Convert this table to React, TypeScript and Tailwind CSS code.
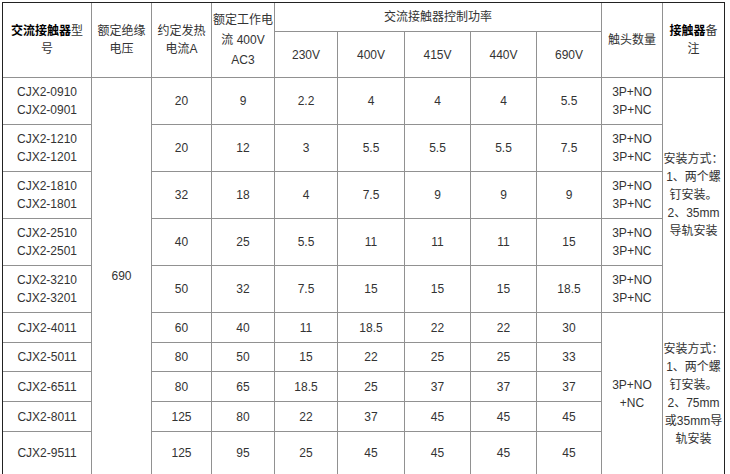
import React from "react";

const rows5 = [
  ["CJX2-0910", "CJX2-0901", "20", "9", "2.2", "4", "4", "4", "5.5"],
  ["CJX2-1210", "CJX2-1201", "20", "12", "3", "5.5", "5.5", "5.5", "7.5"],
  ["CJX2-1810", "CJX2-1801", "32", "18", "4", "7.5", "9", "9", "9"],
  ["CJX2-2510", "CJX2-2501", "40", "25", "5.5", "11", "11", "11", "15"],
  ["CJX2-3210", "CJX2-3201", "50", "32", "7.5", "15", "15", "15", "18.5"],
];

const rowsSingle = [
  ["CJX2-4011", "60", "40", "11", "18.5", "22", "22", "30"],
  ["CJX2-5011", "80", "50", "15", "22", "25", "25", "33"],
  ["CJX2-6511", "80", "65", "18.5", "25", "37", "37", "37"],
  ["CJX2-8011", "125", "80", "22", "37", "45", "45", "45"],
  ["CJX2-9511", "125", "95", "25", "45", "45", "45", "45"],
];

const cell =
  "flex flex-col items-center justify-center text-center border-r border-b border-[#919191] leading-[18px] overflow-hidden";
const lastCell =
  "flex flex-col items-center justify-center text-center border-b border-[#919191] leading-[18px] overflow-hidden";

export default function App() {
  return (
    <div className="w-[730px] h-[474px] overflow-hidden bg-white">
      <div
        className="ml-[2px] mt-[2px] w-[723px] border-l border-t border-r border-[#222] grid grid-cols-[89px_60px_60px_63px_63px_67px_66px_66px_65px_61px_61px] grid-rows-[29px_46px_47px_47px_47px_47px_47px_30px_29px_30px_30px_43px] text-[12px] text-[#333]"
        style={{ fontFamily: '"Liberation Sans", "Noto Sans CJK SC", sans-serif' }}
      >
        {/* header row 1 */}
        <div className={`${cell} row-span-2`}>
          <div>
            <span className="font-bold text-black">交流接触器</span>型
          </div>
          <div>号</div>
        </div>
        <div className={`${cell} row-span-2`}>
          <div>额定绝缘</div>
          <div>电压</div>
        </div>
        <div className={`${cell} row-span-2`}>
          <div>约定发热</div>
          <div>电流A</div>
        </div>
        <div className={`${cell} row-span-2 leading-[20px]`}>
          <div>额定工作电</div>
          <div>流 400V</div>
          <div>AC3</div>
        </div>
        <div className={`${cell} col-span-5`}>交流接触器控制功率</div>
        <div className={`${cell} row-span-2`}>触头数量</div>
        <div className={`${lastCell} row-span-2`}>
          <div>
            <span className="font-bold text-black">接触器</span>备
          </div>
          <div>注</div>
        </div>
        {/* header row 2 */}
        {["230V", "400V", "415V", "440V", "690V"].map((v) => (
          <div key={v} className={cell}>
            {v}
          </div>
        ))}

        {/* data rows with two models */}
        {rows5.map((r, i) => (
          <React.Fragment key={r[0]}>
            <div className={cell}>
              <div>{r[0]}</div>
              <div>{r[1]}</div>
            </div>
            {i === 0 && <div className={`${cell} row-span-10`}>690</div>}
            {r.slice(2).map((v, j) => (
              <div key={j} className={cell}>
                {v}
              </div>
            ))}
            <div className={cell}>
              <div>3P+NO</div>
              <div>3P+NC</div>
            </div>
            {i === 0 && (
              <div className={`${lastCell} row-span-5`}>
                <div className="whitespace-nowrap">安装方式：</div>
                <div className="whitespace-nowrap">1、两个螺</div>
                <div className="whitespace-nowrap">钉安装。</div>
                <div className="whitespace-nowrap">2、35mm</div>
                <div className="whitespace-nowrap">导轨安装</div>
              </div>
            )}
          </React.Fragment>
        ))}

        {/* single model rows */}
        {rowsSingle.map((r, i) => (
          <React.Fragment key={r[0]}>
            <div className={cell}>{r[0]}</div>
            {r.slice(1).map((v, j) => (
              <div key={j} className={cell}>
                {v}
              </div>
            ))}
            {i === 0 && (
              <>
                <div className={`${cell} row-span-5`}>
                  <div>3P+NO</div>
                  <div>+NC</div>
                </div>
                <div className={`${lastCell} row-span-5`}>
                  <div className="whitespace-nowrap">安装方式：</div>
                  <div className="whitespace-nowrap">1、两个螺</div>
                  <div className="whitespace-nowrap">钉安装。</div>
                  <div className="whitespace-nowrap">2、75mm</div>
                  <div className="whitespace-nowrap">或35mm导</div>
                  <div className="whitespace-nowrap">轨安装</div>
                </div>
              </>
            )}
          </React.Fragment>
        ))}
      </div>
    </div>
  );
}
